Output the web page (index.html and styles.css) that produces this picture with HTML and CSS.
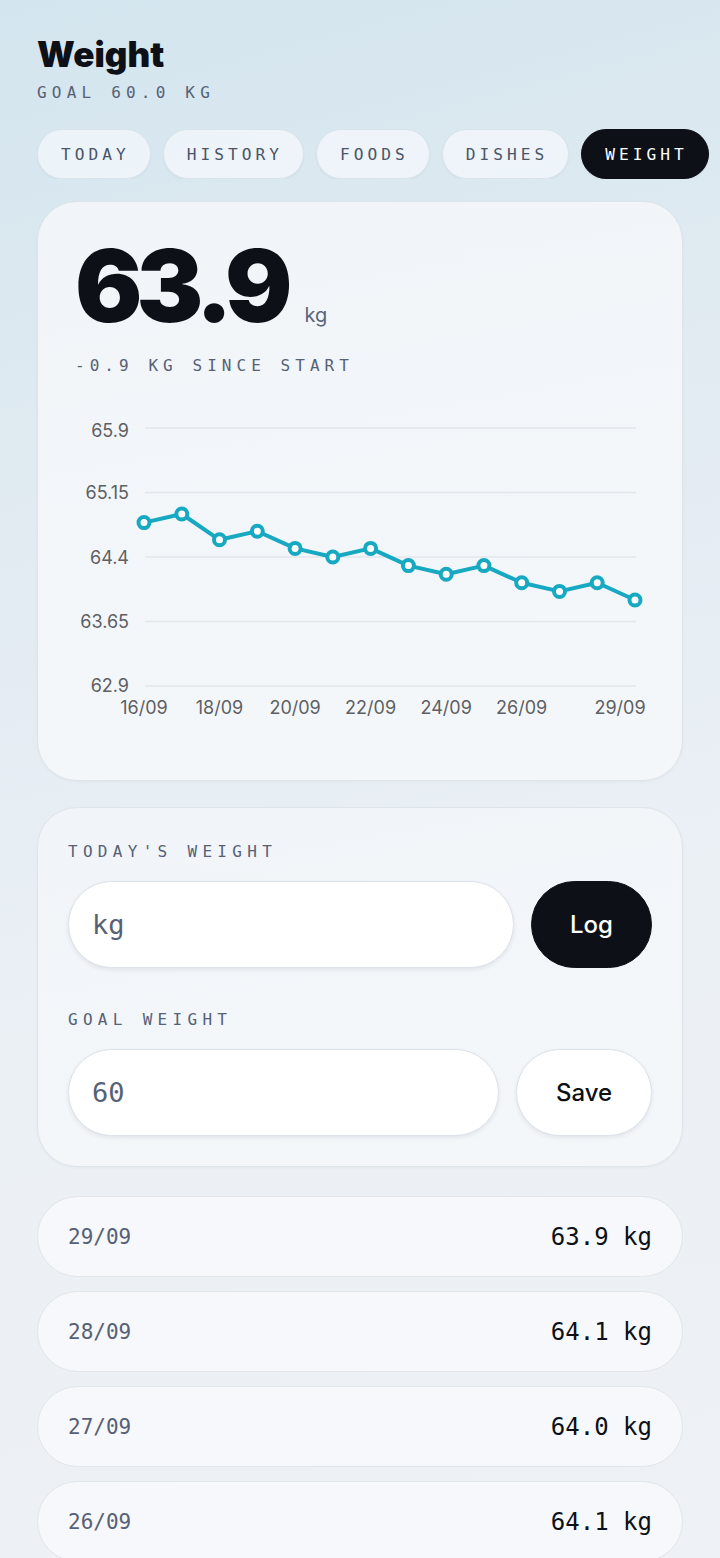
FILE: index.html
```html
<!DOCTYPE html>
<html lang="en">
<head>
<meta charset="utf-8">
<meta name="viewport" content="width=720">
<title>Weight</title>
<link rel="stylesheet" href="styles.css">
</head>
<body>
<div class="page">
  <header class="header">
    <h1 class="title">Weight</h1>
    <div class="goal">GOAL 60.0 KG</div>
  </header>

  <nav class="tabs">
    <span class="tab">TODAY</span>
    <span class="tab">HISTORY</span>
    <span class="tab">FOODS</span>
    <span class="tab">DISHES</span>
    <span class="tab tab-active">WEIGHT</span>
    <span class="tab tab-ghost" aria-hidden="true"></span>
  </nav>

  <section class="card summary">
    <div class="big-row">
      <span class="big-num">63.9</span>
      <span class="big-unit">kg</span>
    </div>
    <div class="since">-0.9 KG SINCE START</div>
    <svg class="chart" width="646" height="320" viewBox="0 0 646 320">
      <g class="grid">
        <line x1="108" y1="18" x2="599" y2="18"/>
        <line x1="108" y1="82.5" x2="599" y2="82.5"/>
        <line x1="108" y1="147" x2="599" y2="147"/>
        <line x1="108" y1="211.5" x2="599" y2="211.5"/>
        <line x1="108" y1="276" x2="599" y2="276"/>
      </g>
      <g class="ylab">
        <text x="92" y="27">65.9</text>
        <text x="92" y="89">65.15</text>
        <text x="92" y="154">64.4</text>
        <text x="92" y="218">63.65</text>
        <text x="92" y="282">62.9</text>
      </g>
      <g class="xlab">
        <text x="107" y="304">16/09</text>
        <text x="182.5" y="304">18/09</text>
        <text x="258.1" y="304">20/09</text>
        <text x="333.6" y="304">22/09</text>
        <text x="409.2" y="304">24/09</text>
        <text x="484.7" y="304">26/09</text>
        <text x="583" y="304">29/09</text>
      </g>
      <polyline class="line" points="107,112.6 144.8,104 182.5,129.8 220.3,121.2 258.1,138.4 295.8,147 333.6,138.4 371.4,155.6 409.2,164.2 446.9,155.6 484.7,172.8 522.5,181.4 560.2,172.8 598,190"/>
      <g class="dots">
        <circle cx="107" cy="112.6" r="5.5"/>
        <circle cx="144.8" cy="104" r="5.5"/>
        <circle cx="182.5" cy="129.8" r="5.5"/>
        <circle cx="220.3" cy="121.2" r="5.5"/>
        <circle cx="258.1" cy="138.4" r="5.5"/>
        <circle cx="295.8" cy="147" r="5.5"/>
        <circle cx="333.6" cy="138.4" r="5.5"/>
        <circle cx="371.4" cy="155.6" r="5.5"/>
        <circle cx="409.2" cy="164.2" r="5.5"/>
        <circle cx="446.9" cy="155.6" r="5.5"/>
        <circle cx="484.7" cy="172.8" r="5.5"/>
        <circle cx="522.5" cy="181.4" r="5.5"/>
        <circle cx="560.2" cy="172.8" r="5.5"/>
        <circle cx="598" cy="190" r="5.5"/>
      </g>
    </svg>
  </section>

  <section class="card form">
    <div class="label">TODAY'S WEIGHT</div>
    <div class="form-row">
      <input class="field" type="text" placeholder="kg">
      <button class="btn btn-dark">Log</button>
    </div>
    <div class="label label-second">GOAL WEIGHT</div>
    <div class="form-row">
      <input class="field" type="text" value="60">
      <button class="btn btn-light">Save</button>
    </div>
  </section>

  <ul class="log-list">
    <li class="log-row"><span class="log-date">29/09</span><span class="log-val">63.9 kg</span></li>
    <li class="log-row"><span class="log-date">28/09</span><span class="log-val">64.1 kg</span></li>
    <li class="log-row"><span class="log-date">27/09</span><span class="log-val">64.0 kg</span></li>
    <li class="log-row"><span class="log-date">26/09</span><span class="log-val">64.1 kg</span></li>
  </ul>
</div>
</body>
</html>
```

FILE: styles.css
```css
* { box-sizing: border-box; }

html, body {
  margin: 0;
  padding: 0;
}

body {
  width: 720px;
  min-height: 1558px;
  overflow-x: hidden;
  background: linear-gradient(165deg, #d3e5ee 0%, #e2ebf2 30%, #ebf0f5 60%, #eef1f6 100%);
  font-family: Inter, "Liberation Sans", sans-serif;
  color: #0d1117;
}

.page {
  padding: 34px 37px 40px;
}

.title {
  margin: 0;
  font-family: Inter, "Liberation Sans", sans-serif;
  font-weight: 900;
  font-size: 35px;
  line-height: 40px;
  letter-spacing: 0;
  color: #0d1117;
}

.goal {
  margin-top: 9px;
  font-family: "DejaVu Sans Mono", monospace;
  font-size: 16px;
  line-height: 20px;
  letter-spacing: 5.2px;
  color: #566176;
}

.tabs {
  display: flex;
  gap: 12px;
  margin-top: 26px;
  margin-right: -37px;
  overflow: hidden;
}

.tab {
  flex: none;
  height: 50px;
  display: flex;
  align-items: center;
  padding: 0 20px 0 23px;
  border-radius: 25px;
  border: 1px solid #d9e3ea;
  background: rgba(244, 248, 252, 0.75);
  box-shadow: 0 1px 2px rgba(30, 50, 70, 0.06);
  font-family: "DejaVu Sans Mono", monospace;
  font-size: 16.2px;
  letter-spacing: 4px;
  color: #4b5568;
}

.tab-active {
  background: #0d1117;
  border-color: #0d1117;
  color: #ffffff;
}

.tab-ghost {
  width: 120px;
}

.card {
  border: 1px solid #dde4ea;
  border-radius: 40px;
  background: linear-gradient(170deg, #f1f5f9 0%, #f4f7fa 100%);
  box-shadow: 0 1px 3px rgba(30, 50, 70, 0.04);
}

.summary {
  margin-top: 22px;
  padding: 34px 37px 50px;
}

.big-row {
  display: flex;
  align-items: baseline;
  height: 100px;
}

.big-num {
  font-family: Inter, "Liberation Sans", sans-serif;
  font-weight: 900;
  font-size: 100px;
  line-height: 100px;
  letter-spacing: -6px;
  color: #0d1117;
}

.big-unit {
  margin-left: 18px;
  font-family: Inter, "Liberation Sans", sans-serif;
  font-size: 20px;
  color: #5a6478;
}

.since {
  margin-top: 20px;
  font-family: "DejaVu Sans Mono", monospace;
  font-size: 16px;
  line-height: 20px;
  letter-spacing: 5.05px;
  color: #566176;
}

.chart {
  display: block;
  margin: 34px -38px 0;
}

.grid line {
  stroke: #e2e7eb;
  stroke-width: 1.5;
}

.ylab text {
  font-family: Inter, "Liberation Sans", sans-serif;
  font-size: 18px;
  fill: #5e5f63;
  text-anchor: end;
}

.xlab text {
  font-family: Inter, "Liberation Sans", sans-serif;
  font-size: 18px;
  fill: #5e5f63;
  text-anchor: middle;
}

.line {
  fill: none;
  stroke: #17a8c2;
  stroke-width: 4;
  stroke-linejoin: round;
  stroke-linecap: round;
}

.dots circle {
  fill: #ffffff;
  stroke: #17a8c2;
  stroke-width: 4;
}

.form {
  margin-top: 26px;
  padding: 34px 30px 30px;
}

.label {
  font-family: "DejaVu Sans Mono", monospace;
  font-size: 16px;
  line-height: 20px;
  letter-spacing: 5.3px;
  color: #566176;
}

.label-second {
  margin-top: 42px;
}

.form-row {
  display: flex;
  gap: 17px;
  margin-top: 19px;
}

.field {
  flex: 1;
  min-width: 0;
  height: 87px;
  border-radius: 44px;
  border: 1px solid #dde2e8;
  background: #ffffff;
  box-shadow: 0 2px 4px rgba(20, 30, 45, 0.08);
  padding: 0 23px;
  font-family: "DejaVu Sans Mono", monospace;
  font-size: 27px;
  color: #566176;
  outline: none;
}

.field::placeholder {
  color: #566176;
  opacity: 1;
}

.btn {
  flex: none;
  height: 87px;
  border-radius: 44px;
  font-family: Inter, "Liberation Sans", sans-serif;
  font-size: 24px;
  font-weight: 500;
  cursor: pointer;
}

.btn-dark {
  width: 121px;
  background: #0d1117;
  border: 1px solid #0d1117;
  color: #ffffff;
}

.btn-light {
  width: 136px;
  background: #ffffff;
  border: 1px solid #dde2e8;
  box-shadow: 0 2px 4px rgba(20, 30, 45, 0.08);
  color: #0d1117;
}

.log-list {
  list-style: none;
  margin: 29px 0 0;
  padding: 0;
  display: flex;
  flex-direction: column;
  gap: 14px;
}

.log-row {
  height: 81px;
  display: flex;
  align-items: center;
  justify-content: space-between;
  padding: 0 30px;
  border: 1px solid #e1e6eb;
  border-radius: 41px;
  background: #f6f8fb;
}

.log-date {
  font-family: "DejaVu Sans Mono", monospace;
  font-size: 21px;
  color: #566176;
}

.log-val {
  font-family: "DejaVu Sans Mono", monospace;
  font-size: 24px;
  color: #0d1117;
}
```
